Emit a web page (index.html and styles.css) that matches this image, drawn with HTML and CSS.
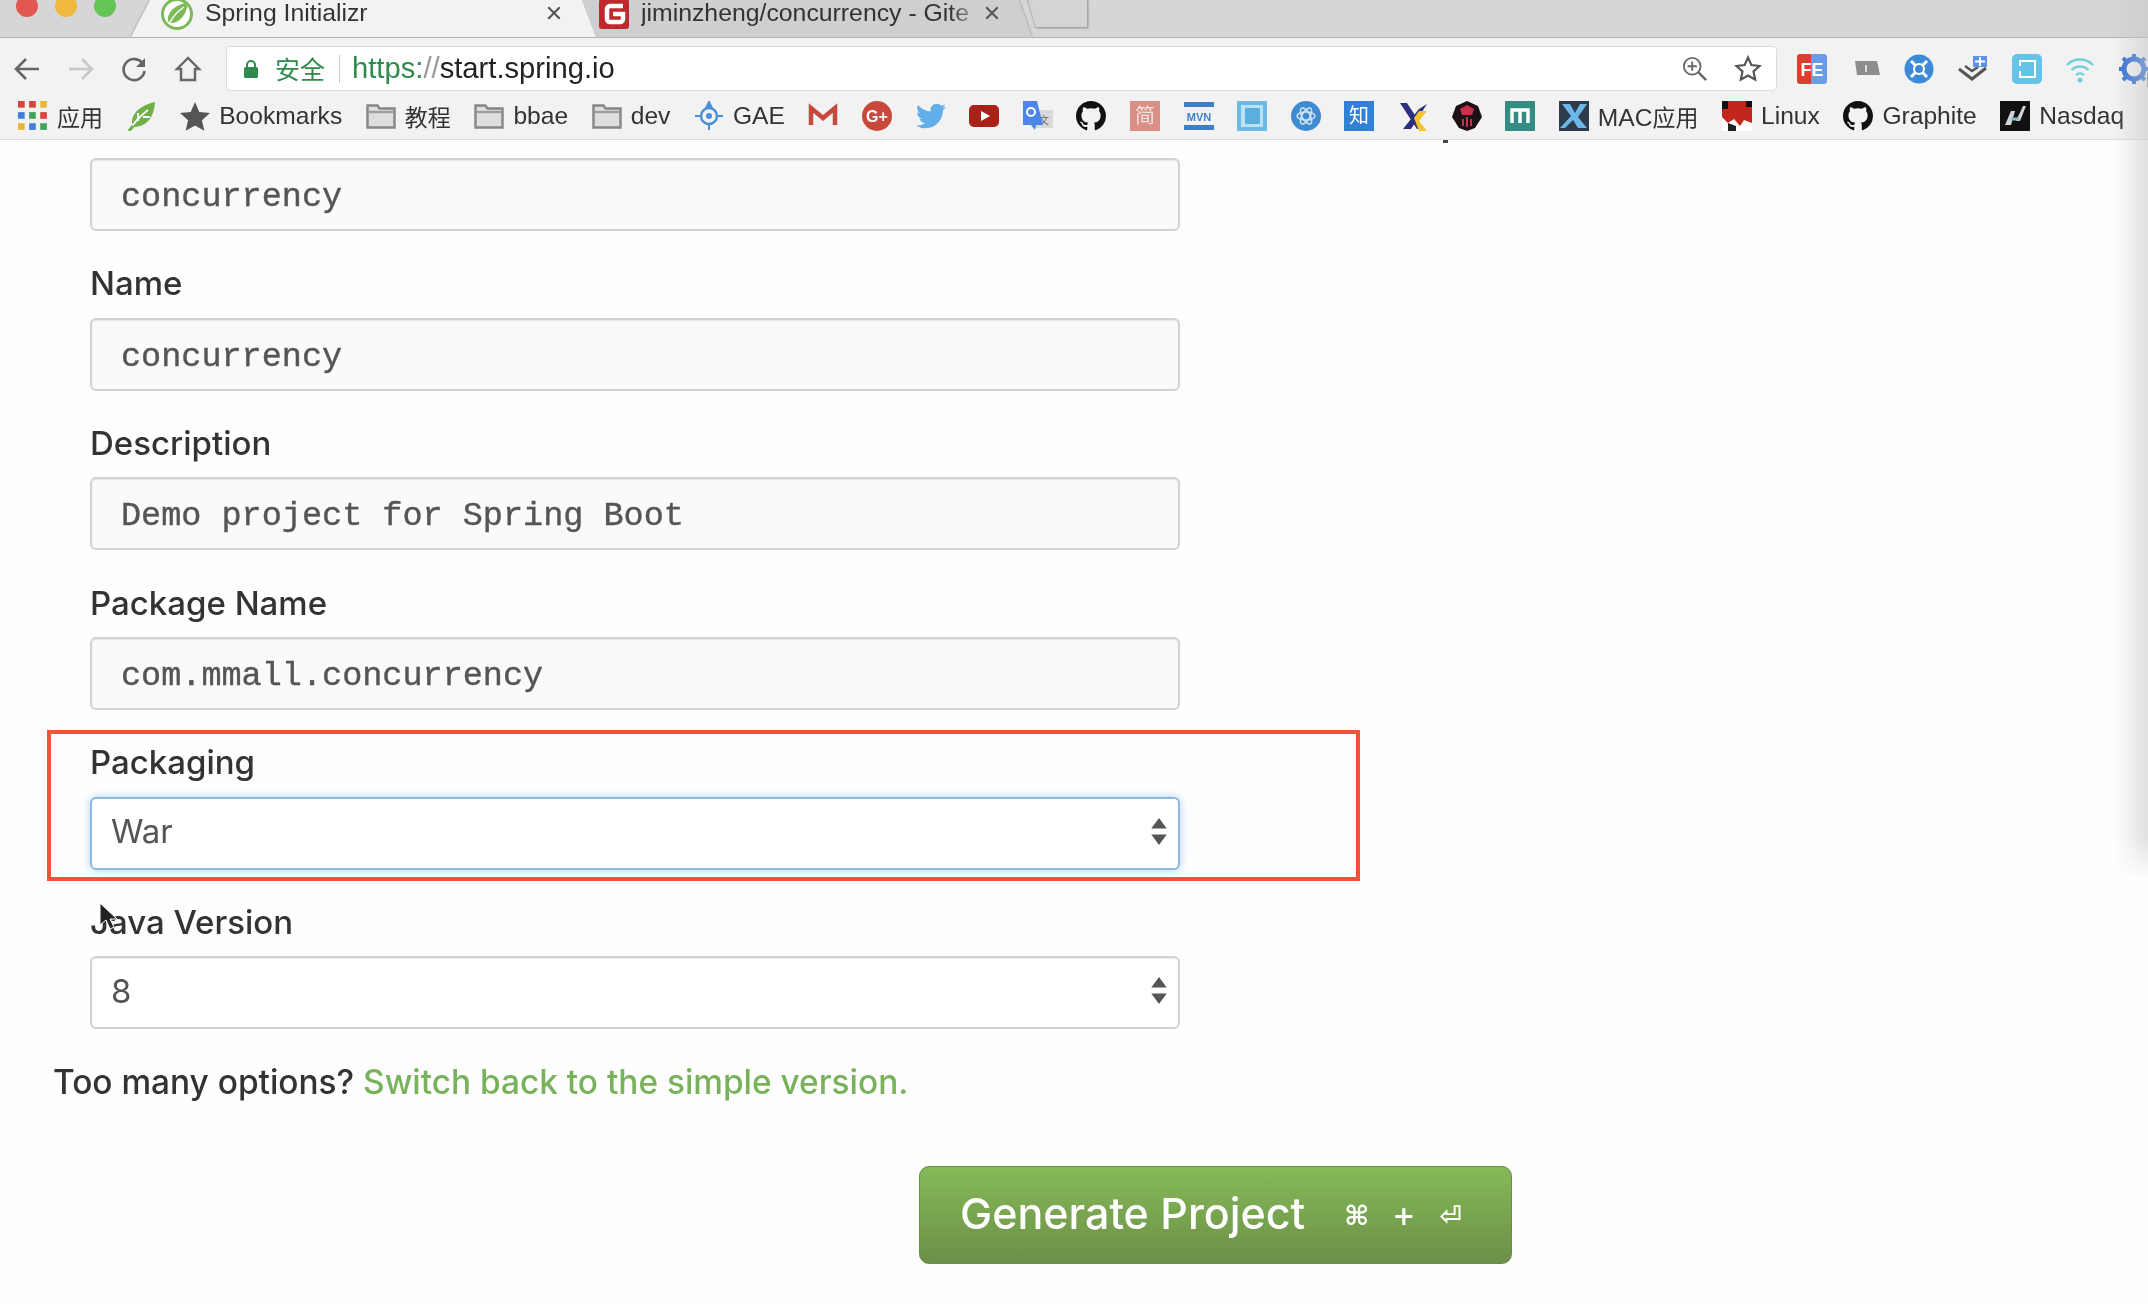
FILE: index.html
```html
<!DOCTYPE html>
<html lang="en">
<head>
<meta charset="utf-8">
<title>Spring Initializr</title>
<link rel="stylesheet" href="styles.css">
</head>
<body>
<div class="app">
  <svg class="defs" width="0" height="0" aria-hidden="true">
    <symbol id="gh" viewBox="0 0 16 16"><path fill="#111" d="M8 0C3.58 0 0 3.58 0 8c0 3.54 2.29 6.53 5.47 7.59.4.07.55-.17.55-.38 0-.19-.01-.82-.01-1.49-2.01.37-2.53-.49-2.69-.94-.09-.23-.48-.94-.82-1.13-.28-.15-.68-.52-.01-.53.63-.01 1.08.58 1.23.82.72 1.21 1.87.87 2.33.66.07-.52.28-.87.51-1.07-1.78-.2-3.64-.89-3.64-3.95 0-.87.31-1.59.82-2.15-.08-.2-.36-1.02.08-2.12 0 0 .67-.21 2.2.82.64-.18 1.32-.27 2-.27s1.36.09 2 .27c1.53-1.04 2.2-.82 2.2-.82.44 1.1.16 1.92.08 2.12.51.56.82 1.27.82 2.15 0 3.07-1.87 3.75-3.65 3.95.29.25.54.73.54 1.48 0 1.07-.01 1.93-.01 2.2 0 .21.15.46.55.38A8.013 8.013 0 0016 8c0-4.42-3.58-8-8-8z"/></symbol>
    <symbol id="folder" viewBox="0 0 30 26"><path d="M1.500 24.500V2.500h10l2 3h15v19z" fill="#dedede" stroke="#868686" stroke-width="2.400"/><path d="M2 9h26" stroke="#9c9c9c" stroke-width="2.400"/></symbol>
    <symbol id="updown" viewBox="0 0 16 30"><path d="M8 1l8 11H0zM0 18h16L8 29z" fill="#555"/></symbol>
    <symbol id="close" viewBox="0 0 14 14"><path d="M2 2l10 10M12 2L2 12" stroke="#555" stroke-width="1.800" fill="none"/></symbol>
  </svg>

  <div class="tabstrip">
    <svg class="lights" viewBox="0 0 131 37" width="131" height="37"><circle cx="27" cy="6" r="11" fill="#e2574f"/><circle cx="66" cy="6" r="11" fill="#f0b93e"/><circle cx="105" cy="6" r="11" fill="#62c554"/></svg>
    <div class="tabs">
      <div class="tab tab-active">
        <svg class="fav" viewBox="0 0 32 32" width="32" height="32"><circle cx="16" cy="16" r="14.500" fill="#fff" stroke="#7fb95a" stroke-width="3"/><path d="M27 4C26 16 19 26 8 25 4 17 11 8 27 4z" fill="#7fb95a"/><path d="M8 26C12 18 17 13 23 9" stroke="#fff" stroke-width="1.500" fill="none"/></svg>
        <span class="tab-title">Spring Initializr</span>
        <svg class="tab-x"><use href="#close"/></svg>
      </div>
      <div class="tab tab-other">
        <svg class="fav" viewBox="0 0 32 32" width="32" height="32"><rect x="1" y="1" width="30" height="30" rx="3" fill="#c0282d"/><path d="M25 8H12a3 3 0 0 0-3 3v10a3 3 0 0 0 3 3h10a3 3 0 0 0 3-3v-5H15" fill="none" stroke="#fff" stroke-width="4.500"/></svg>
        <span class="tab-title tab-fade">jiminzheng/concurrency - Gite</span>
        <svg class="tab-x"><use href="#close"/></svg>
      </div>
      <div class="newtab"></div>
    </div>
  </div>

  <div class="toolbar">
    <div class="nav">
      <svg class="nav-icon" viewBox="0 0 28 28"><path d="M26 14H4M13 4L3 14l10 10" fill="none" stroke="#666" stroke-width="2.600"/></svg>
      <svg class="nav-icon" viewBox="0 0 28 28"><path d="M2 14h22M15 4l10 10-10 10" fill="none" stroke="#c8c8c8" stroke-width="2.600"/></svg>
      <svg class="nav-icon" viewBox="0 0 28 28"><path d="M23 9a10.500 10.500 0 1 0 1.500 7" fill="none" stroke="#666" stroke-width="2.600"/><path d="M25 3v9h-9z" fill="#666"/></svg>
      <svg class="nav-icon" viewBox="0 0 28 28"><path d="M14 3L3 14h4v11h14V14h4z" fill="none" stroke="#666" stroke-width="2.400"/></svg>
    </div>
    <div class="omnibox">
      <svg class="lock" viewBox="0 0 16 20" width="16" height="20"><path d="M4 9V6a4 4 0 0 1 8 0v3" fill="none" stroke="#2f8a4b" stroke-width="2"/><rect x="1" y="8" width="14" height="11" rx="1.500" fill="#2f8a4b"/></svg>
      <span class="secure">安全</span>
      <span class="divider"></span>
      <span class="url"><span class="url-scheme">https:</span><span class="url-slash">//</span>start.spring.io</span>
      <svg class="omni-end omni-zoom" viewBox="0 0 28 28" width="26" height="26"><circle cx="11" cy="11" r="9" fill="none" stroke="#666" stroke-width="2"/><path d="M18 18l8 8" stroke="#666" stroke-width="2.600"/><path d="M6 11h10M11 6v10" stroke="#666" stroke-width="2"/></svg>
      <svg class="omni-end" viewBox="0 0 28 28" width="28" height="28"><path d="M14 2.500l3.400 7.600 8.100.9-6 5.500 1.700 8.100-7.200-4.100-7.200 4.100 1.700-8.100-6-5.500 8.100-.9z" fill="none" stroke="#555" stroke-width="2.200"/></svg>
    </div>
    <div class="exts">
      <svg class="ext" viewBox="0 0 30 30"><rect x="0" y="0" width="16" height="30" rx="3" fill="#d8412c"/><rect x="14" y="0" width="16" height="30" rx="3" fill="#6b9be8"/><text x="15" y="22" class="svg-fe">FE</text></svg>
      <svg class="ext" viewBox="0 0 30 30"><path d="M4 7h22l3 14H6z" fill="#8d8d8d"/><path d="M15 11v7" stroke="#ddd" stroke-width="2"/></svg>
      <svg class="ext" viewBox="0 0 30 30"><circle cx="15" cy="15" r="14.500" fill="#3d8bd8"/><circle cx="15" cy="15" r="5" fill="none" stroke="#fff" stroke-width="2"/><path d="M7 7l5 5M23 7l-5 5M7 23l5-5M23 23l-5-5" stroke="#fff" stroke-width="3"/></svg>
      <svg class="ext" viewBox="0 0 30 30"><path d="M1 15l13 10 14-11" fill="none" stroke="#555" stroke-width="3"/><path d="M7 12l7 5 6-4" fill="none" stroke="#555" stroke-width="2.500"/><rect x="15" y="2" width="14" height="11" fill="#5c93e6"/><path d="M22 3v9M17 7.500h10" stroke="#fff" stroke-width="2"/></svg>
      <svg class="ext" viewBox="0 0 30 30"><rect x="0" y="0" width="30" height="30" rx="5" fill="#66c3e8"/><rect x="8" y="7" width="15" height="16" fill="none" stroke="#fff" stroke-width="2"/><path d="M8 12v5" stroke="#66c3e8" stroke-width="3"/></svg>
      <svg class="ext" viewBox="0 0 30 30"><path d="M2 11a18 18 0 0 1 26 0M6.500 16a12 12 0 0 1 17 0M11 21a6 6 0 0 1 8 0" fill="none" stroke="#6fd0dc" stroke-width="2.400"/><circle cx="15" cy="26" r="2.500" fill="#6fd0dc"/></svg>
      <div class="ext-gear">
        <svg class="ext" viewBox="0 0 30 30"><circle cx="15" cy="15" r="10" fill="none" stroke="#2f6fd8" stroke-width="5"/><path d="M15 0v6M15 24v6M0 15h6M24 15h6M4 4l4 4M26 4l-4 4M4 26l4-4M26 26l-4-4" stroke="#2f6fd8" stroke-width="4"/></svg>
        <span class="gear-badge"></span>
      </div>
    </div>
  </div>

  <div class="bookmarks">
    <div class="bm"><svg class="bi" viewBox="0 0 27 27"><g><rect x="0" y="0" width="6" height="6" fill="#d8453a"/><rect x="10" y="0" width="6" height="6" fill="#d8453a"/><rect x="20" y="0" width="6" height="6" fill="#e9b53a"/><rect x="0" y="10" width="6" height="6" fill="#3f7fdb"/><rect x="10" y="10" width="6" height="6" fill="#3fa55a"/><rect x="20" y="10" width="6" height="6" fill="#d8453a"/><rect x="0" y="20" width="6" height="6" fill="#e9b53a"/><rect x="10" y="20" width="6" height="6" fill="#3f7fdb"/><rect x="20" y="20" width="6" height="6" fill="#3fa55a"/></g></svg><span class="cjk">应用</span></div>
    <div class="bm"><svg class="bi" viewBox="0 0 30 30"><path d="M28 1C27 16 20 26 6 26 2 16 10 5 28 1z" fill="#6fb048"/><path d="M2 30C7 21 13 15 21 9M11 20V12M16 16h7" stroke="#fff" stroke-width="1.800" fill="none"/><path d="M2 30l4-5" stroke="#6fb048" stroke-width="3"/></svg></div>
    <div class="bm"><svg class="bi" viewBox="0 0 28 28"><path d="M14 1l4 9.200 10 1-7.500 6.700 2.200 9.800L14 22.800l-8.700 5 2.200-9.800L0 11.200l10-1z" fill="#555"/></svg><span>Bookmarks</span></div>
    <div class="bm"><svg class="bi"><use href="#folder"/></svg><span class="cjk">教程</span></div>
    <div class="bm"><svg class="bi"><use href="#folder"/></svg><span>bbae</span></div>
    <div class="bm"><svg class="bi"><use href="#folder"/></svg><span>dev</span></div>
    <div class="bm"><svg class="bi" viewBox="0 0 30 30"><circle cx="15" cy="15" r="8" fill="none" stroke="#4a90d9" stroke-width="2.500"/><circle cx="15" cy="15" r="3" fill="#4a90d9"/><path d="M15 1l3 6h-6zM1 15h5M24 15h5M15 23v6" stroke="#4a90d9" stroke-width="2" fill="#4a90d9"/></svg><span>GAE</span></div>
    <div class="bm"><svg class="bi" viewBox="0 0 30 30"><path d="M3 24V7l12 10L27 7v17" fill="none" stroke="#c7493e" stroke-width="4.500"/></svg></div>
    <div class="bm"><svg class="bi" viewBox="0 0 30 30"><circle cx="15" cy="15" r="15" fill="#c8483c"/><text x="15" y="21" class="svg-gp">G+</text></svg></div>
    <div class="bm"><svg class="bi" viewBox="0 0 24 24"><path fill="#62aee8" d="M23.950 4.570a10 10 0 0 1-2.820.77 4.960 4.960 0 0 0 2.160-2.720c-.95.550-2 .96-3.130 1.190a4.920 4.920 0 0 0-8.380 4.480C7.690 8.100 4.070 6.130 1.640 3.160a4.820 4.820 0 0 0-.67 2.480c0 1.710.87 3.210 2.190 4.100a4.900 4.900 0 0 1-2.230-.62v.06a4.920 4.920 0 0 0 3.950 4.830 5 5 0 0 1-2.210.08 4.940 4.940 0 0 0 4.600 3.420A9.870 9.870 0 0 1 0 19.540a14 14 0 0 0 7.560 2.210c9.050 0 14-7.500 14-13.980 0-.21 0-.42-.02-.63a9.940 9.940 0 0 0 2.460-2.550z"/></svg></div>
    <div class="bm"><svg class="bi" viewBox="0 0 30 30"><rect x="0" y="4" width="30" height="22" rx="5" fill="#a8221a"/><path d="M12 10l9 5-9 5z" fill="#fff"/></svg></div>
    <div class="bm"><svg class="bi" viewBox="0 0 30 30"><rect x="12" y="9" width="18" height="18" fill="#d8d8d8"/><text x="21" y="23" class="svg-tr">文</text><path d="M0 0h14l6 24h-7l-1 5-4-5H0z" fill="#4d86e8"/><circle cx="8" cy="11" r="4" fill="none" stroke="#fff" stroke-width="2"/></svg></div>
    <div class="bm"><svg class="bi"><use href="#gh"/></svg></div>
    <div class="bm"><svg class="bi" viewBox="0 0 30 30"><rect width="30" height="30" fill="#d98f85"/><text x="15" y="22" class="svg-cjk svg-pale">简</text></svg></div>
    <div class="bm"><svg class="bi" viewBox="0 0 30 30"><rect x="0" y="1" width="30" height="5" fill="#3f7fc8"/><rect x="0" y="24" width="30" height="5" fill="#3f7fc8"/><text x="15" y="20" class="svg-mvn">MVN</text></svg></div>
    <div class="bm"><svg class="bi" viewBox="0 0 30 30"><rect width="30" height="30" fill="#6cb9e6"/><rect x="4" y="4" width="22" height="22" fill="#b9e2f5"/><rect x="8" y="7" width="15" height="16" fill="#59b0e0"/></svg></div>
    <div class="bm"><svg class="bi" viewBox="0 0 30 30"><circle cx="15" cy="15" r="15" fill="#3f8ad0"/><g fill="none" stroke="#cfe4f7" stroke-width="1.500"><ellipse cx="15" cy="15" rx="9" ry="4"/><ellipse cx="15" cy="15" rx="9" ry="4" transform="rotate(60 15 15)"/><ellipse cx="15" cy="15" rx="9" ry="4" transform="rotate(120 15 15)"/></g></svg></div>
    <div class="bm"><svg class="bi" viewBox="0 0 30 30"><rect width="30" height="30" fill="#2f82d6"/><text x="15" y="22" class="svg-cjk">知</text></svg></div>
    <div class="bm"><svg class="bi" viewBox="0 0 30 30"><path d="M2 2h7l17 26h-7z" fill="#2c2f80"/><path d="M29 3L13 28H5L21 8z" fill="#2c2f80"/><path d="M16 17l5-7h8L21 20l8 10h-8z" fill="#f2c530"/></svg></div>
    <div class="bm"><svg class="bi" viewBox="0 0 30 30"><path d="M15 0l11 5 4 11-7 11-8 3-8-3L0 16 4 5z" fill="#1c1014"/><path d="M15 4l7 4-2 6h-10L8 8z" fill="#c9304e"/><path d="M11 18v7M19 18v7M15 16v10" stroke="#c9304e" stroke-width="2"/></svg></div>
    <div class="bm"><svg class="bi" viewBox="0 0 30 30"><rect width="30" height="30" fill="#338d82"/><path d="M7 22V9h16v13M15 9v13" fill="none" stroke="#fff" stroke-width="3.500"/></svg></div>
    <div class="bm"><svg class="bi" viewBox="0 0 30 30"><rect width="30" height="30" fill="#2d3b4a"/><path d="M3 3h8l5 9 5-9h7l-9 13 9 11h-9l-5-8-8 8H1l11-12z" fill="#6db7e8"/></svg><span>MAC<span class="cjk">应用</span></span></div>
    <div class="bm"><svg class="bi" viewBox="0 0 30 30"><rect width="30" height="30" fill="#fff"/><path d="M0 0h30v22l-8-3-4 6-6-7-6 4-6-6z" fill="#c2261c"/><path d="M0 0h6v8H0zM24 0h6v6h-6z" fill="#111"/><path d="M6 22l8 3v5H6z" fill="#222"/></svg><span>Linux</span></div>
    <div class="bm"><svg class="bi"><use href="#gh"/></svg><span>Graphite</span></div>
    <div class="bm"><svg class="bi" viewBox="0 0 30 30"><rect width="30" height="30" fill="#111"/><path d="M5 24l6-14h4l-4 14zM16 20l7-15h3l-6 15z" fill="#d4d4d4"/><path d="M11 18h8" stroke="#7ac0d8" stroke-width="3"/></svg><span>Nasdaq</span></div>
  </div>

  <main class="page">
    <span class="clipped-mark"></span>
    <div class="form">
      <div class="field field-text"><span>concurrency</span></div>
      <label class="flabel">Name</label>
      <div class="field field-text"><span>concurrency</span></div>
      <label class="flabel">Description</label>
      <div class="field field-text"><span>Demo project for Spring Boot</span></div>
      <label class="flabel">Package Name</label>
      <div class="field field-text"><span>com.mmall.concurrency</span></div>
      <div class="highlighted">
        <span class="redbox"></span>
        <label class="flabel">Packaging</label>
        <div class="field field-select field-focus"><span>War</span><svg class="updown"><use href="#updown"/></svg></div>
      </div>
      <label class="flabel">Java Version</label>
      <div class="field field-select"><span>8</span><svg class="updown"><use href="#updown"/></svg></div>
    </div>
    <p class="toggle">Too many options? <a class="toggle-link">Switch back to the simple version.</a></p>
    <div class="actions">
      <div class="generate"><span class="gen-label">Generate Project</span><span class="keys"><span>⌘</span><span>+</span><span>⏎</span></span></div>
    </div>
    <svg class="cursor" viewBox="0 0 20 30" width="20" height="30"><path d="M1 1v22l6-5 4 9 4-2-4-8h7z" fill="#222" stroke="#fff" stroke-width="1"/></svg>
  </main>
  <div class="edge-shadow"></div>
</div>
</body>
</html>
```
FILE: styles.css
```css
* { box-sizing: border-box; }
html, body { margin: 0; padding: 0; background: #fff; }
.app {
  position: relative;
  width: 2148px;
  height: 1304px;
  overflow: hidden;
  font-family: "Liberation Sans", Arial, "Noto Sans CJK SC", sans-serif;
  filter: blur(0.6px);
}
.defs { position: absolute; }

/* tab strip */
.tabstrip {
  display: flex;
  height: 38px;
  background: #d6d6d8;
  border-bottom: 1px solid #b4b4b6;
  overflow: hidden;
}
.lights { flex: none; }
.tabs { display: flex; height: 37px; filter: drop-shadow(0 0 1px #888); }
.tab {
  display: flex;
  align-items: center;
  height: 37px;
  font-size: 24.8px;
  line-height: 28px;
  color: #333;
}
.tab-active {
  position: relative;
  z-index: 2;
  width: 465px;
  padding: 0 34px 12px 30px;
  background: #f2f2f2;
  clip-path: polygon(19px 0, calc(100% - 14px) 0, 100% 100%, 0 100%);
}
.tab-other {
  width: 450px;
  margin-left: -14px;
  padding: 0 32px 12px 16px;
  background: #cfcfd1;
  clip-path: polygon(0 0, calc(100% - 13px) 0, 100% 100%, 14px 100%);
}
.fav { flex: none; margin-right: 12px; margin-top: 2px; }
.tab-other .fav { margin-right: 11px; }
.tab-title { flex: 1; white-space: nowrap; }
.tab-fade { -webkit-mask-image: linear-gradient(90deg, #000 90%, transparent); mask-image: linear-gradient(90deg, #000 90%, transparent); }
.tab-x { flex: none; width: 16px; height: 16px; }
.newtab {
  width: 60px;
  height: 28px;
  margin-left: -4px;
  background: #d4d4d6;
  border: 1px solid #a5a5a7;
  border-top: none;
  clip-path: polygon(0 0, 100% 0, 100% 100%, 8px 100%);
}

/* toolbar */
.toolbar {
  display: flex;
  align-items: center;
  height: 58px;
  padding: 3px 0 0 13px;
  background: #f2f2f2;
}
.nav { display: flex; gap: 25.7px; width: 213px; flex: none; }
.nav-icon { width: 28px; height: 28px; }
.omnibox {
  display: flex;
  align-items: center;
  width: 1551px;
  height: 45px;
  flex: none;
  padding: 0 14px 0 16px;
  background: #fff;
  border: 1px solid #dcdcdc;
  border-radius: 4px;
  font-size: 29.2px;
}
.lock { flex: none; }
.secure { margin: 0 0 2px 16px; font-size: 25px; color: #2f8a4b; }
.divider { width: 1px; height: 28px; margin: 0 12px 0 14px; background: #ccc; }
.url { color: #222; }
.url-scheme { color: #2f8a4b; }
.url-slash { color: #999; }
.omni-end { flex: none; margin-left: 26px; }
.omni-zoom { margin-left: auto; }
.exts { display: flex; gap: 23.7px; padding-left: 20px; flex: none; }
.ext { display: block; width: 30px; height: 30px; flex: none; }
.ext-gear { position: relative; }
.gear-badge {
  position: absolute;
  right: -12px;
  bottom: -4px;
  width: 14px;
  height: 16px;
  background: #888;
  border-radius: 2px;
}
.svg-fe { font: 700 18px "Liberation Sans", sans-serif; fill: #fff; text-anchor: middle; }
.svg-gp { font: 700 16px "Liberation Sans", sans-serif; fill: #fff; text-anchor: middle; }
.svg-tr { font: 10px "Noto Sans CJK SC", sans-serif; fill: #666; text-anchor: middle; }
.svg-cjk { font: 20px "Noto Sans CJK SC", sans-serif; fill: #fff; text-anchor: middle; }
.svg-pale { fill: #f6e2de; }
.svg-mvn { font: 700 11px "Liberation Sans", sans-serif; fill: #3f7fc8; text-anchor: middle; }

/* bookmarks */
.bookmarks {
  display: flex;
  align-items: center;
  gap: 23.6px;
  height: 44px;
  padding: 0 0 3px 18px;
  background: #f2f2f2;
  border-bottom: 1px solid #dcdcdc;
  font-size: 24.6px;
  color: #333;
  white-space: nowrap;
}
.cjk { font-size: 23px; }
.bm { display: flex; align-items: center; gap: 9px; flex: none; }
.bi { display: block; width: 30px; height: 30px; flex: none; }

/* page */
.page {
  position: relative;
  height: 1164px;
  padding: 18px 0 0 90px;
  background: #fefefe;
  font-family: "Inter", "Noto Sans", sans-serif;
}
.clipped-mark {
  position: absolute;
  top: 0;
  left: 1443px;
  width: 5px;
  height: 3px;
  background: #444;
}
.form { width: 1090px; }
.flabel {
  display: flex;
  align-items: center;
  height: 86.7px;
  padding-top: 18px;
  font-size: 33px;
  font-weight: 500;
  color: #333;
}
.field {
  display: flex;
  align-items: center;
  height: 73px;
  background: #fafafa;
  border: 2px solid #d2d2d2;
  border-radius: 6px;
  box-shadow: inset 0 1px 1px rgba(0, 0, 0, .08);
  color: #555;
}
.field-text {
  padding: 5px 0 0 29px;
  font-family: "Liberation Mono", monospace;
  font-size: 33.5px;
  -webkit-text-stroke: .4px #555;
}
.field-select {
  justify-content: space-between;
  padding: 0 11px 4px 19px;
  background: #fff;
  font-size: 33px;
}
.field-focus {
  border-color: #8fb8e0;
  box-shadow: 0 0 8px rgba(102, 175, 233, .55);
}
.updown { width: 16px; height: 29px; }
.highlighted { position: relative; }
.redbox {
  position: absolute;
  left: -43px;
  top: 20px;
  width: 1313px;
  height: 151px;
  border: 4px solid #f4503a;
  pointer-events: none;
}
.toggle {
  margin: 33px 0 0 -37px;
  font-size: 33.4px;
  font-weight: 450;
  color: #333;
}
.toggle-link { color: #78b35c; }
.actions { display: flex; padding-left: 829px; margin-top: 64px; }
.generate {
  display: flex;
  align-items: center;
  width: 593px;
  height: 98px;
  padding-left: 40px;
  border: 1px solid #6c8c4c;
  border-radius: 10px;
  background: linear-gradient(#86b958, #6b9047);
  color: #fff;
  font-size: 43px;
  white-space: nowrap;
}
.gen-label { font-weight: 500; margin-bottom: 5px; }
.keys {
  display: grid;
  grid-template-columns: repeat(3, 47px);
  justify-items: center;
  margin-left: 28px;
  font-family: "DejaVu Sans", sans-serif;
  font-size: 27px;
  font-weight: 700;
}
.cursor { position: absolute; left: 99px; top: 762px; }
.edge-shadow {
  position: absolute;
  top: 0;
  right: 0;
  width: 34px;
  height: 880px;
  background: linear-gradient(90deg, rgba(200, 200, 200, 0), rgba(200, 200, 200, .55));
  -webkit-mask-image: linear-gradient(#000 95%, transparent);
  mask-image: linear-gradient(#000 95%, transparent);
  pointer-events: none;
}
```
